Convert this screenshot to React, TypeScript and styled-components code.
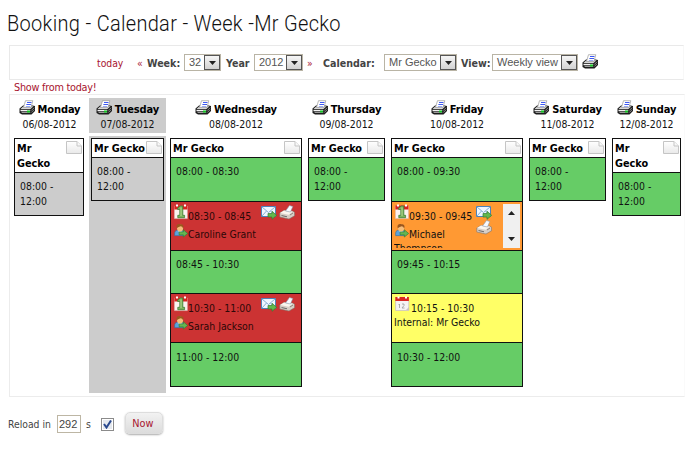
import React from 'react';
import styled, { createGlobalStyle, css } from 'styled-components';

const sans = `"DejaVu Sans Condensed", "DejaVu Sans", Tahoma, sans-serif`;

const GlobalStyle = createGlobalStyle`
  * { box-sizing: border-box; }
  body { margin: 0; background: #fff; font-family: ${sans}; font-stretch: condensed; font-size: 10.4px; color: #111; }
  svg { display: block; flex: none; }
`;

const Page = styled.main`
  width: 695px;
  height: 450px;
  padding-left: 9px;
  overflow: hidden;
  display: flex;
  flex-direction: column;
`;

const Title = styled.h1`
  margin: 0 0 0 -2px;
  height: 45px;
  padding-top: 10px;
  font: 300 22px/28px Roboto, sans-serif;
  letter-spacing: 0.35px;
  color: #111;
  white-space: nowrap;
  transform: scaleX(0.908);
  transform-origin: 0 0;
`;

const Toolbar = styled.div`
  display: flex;
  width: 675px;
  height: 35px;
  border: 1px solid #e9e9e9;
  border-right-color: #f8f8f8;
  padding: 8px 0 0 87px;
`;

const Item = styled.span<{ $w: number; $tone?: 'link' | 'bold' }>`
  width: ${p => p.$w}px;
  line-height: 19px;
  white-space: nowrap;
  color: ${p => (p.$tone === 'link' ? '#a8152f' : '#444')};
  font-weight: ${p => (p.$tone === 'bold' ? 700 : 400)};
  font-size: ${p => (p.$tone === 'bold' ? 10.6 : 10.3)}px;
`;

const Select = styled.span<{ $w: number; $gap: number }>`
  display: flex;
  width: ${p => p.$w}px;
  height: 17px;
  margin-right: ${p => p.$gap}px;
  border: 1px solid #b9b4a5;
  font: 11px/15px "Liberation Sans", Arial, sans-serif;
  color: #555;
  padding-left: 4px;
  justify-content: space-between;
  white-space: nowrap;
`;

const SelectButton = styled.span`
  display: flex;
  align-items: center;
  justify-content: center;
  width: 16px;
  border: 1px solid #555;
  background: linear-gradient(#f6f6f6, #d2d2d2);
`;

const ShowLink = styled.div`
  height: 14px;
  padding-left: 5px;
  font-size: 10.8px;
  letter-spacing: -0.25px;
  line-height: 15px;
  color: #a8152f;
`;

const Week = styled.section`
  display: grid;
  grid-template-columns: 75px 77px 136px 81px 136px 81px 73px;
  grid-template-rows: 35px 257px;
  gap: 3px 2px;
  width: 676px;
  height: 303px;
  border: 1px solid #ececec;
  border-right-color: #fafafa;
  padding: 3px 0 0 2px;
`;

const DayHead = styled.header<{ $today?: boolean }>`
  background: ${p => (p.$today ? '#ccc' : 'transparent')};
  padding-top: 2px;
  text-align: center;
  line-height: 15px;
  white-space: nowrap;
`;

const DayName = styled.div`
  display: flex;
  justify-content: center;
  gap: 2px;
  height: 17px;
  font-weight: 700;
  font-size: 11px;
  letter-spacing: -0.1px;
  line-height: 20px;
  color: #000;
`;

const DayColumn = styled.div<{ $today?: boolean }>`
  background: ${p => (p.$today ? '#ccc' : 'transparent')};
  padding: 2px 2px 0;
`;

const Slots = styled.div<{ $narrow?: boolean }>`
  border: 1px solid #111;
  margin-right: ${p => (p.$narrow ? 1 : 0)}px;
`;

const Owner = styled.div<{ $tall?: boolean }>`
  display: flex;
  justify-content: space-between;
  height: ${p => (p.$tall ? 33 : 18)}px;
  padding: 2px 1px 0 2px;
  background: #fff;
  font-weight: 700;
  font-size: 10.8px;
  line-height: 15px;
  white-space: pre;
  color: #000;
`;

const colors = { free: '#66cc66', past: '#cccccc', booked: '#cc3333', pending: '#ff9933', internal: '#ffff66' };
type Kind = keyof typeof colors;

const Slot = styled.div<{ $kind: Kind }>`
  height: 44px;
  border-top: 1px solid #111;
  background: ${p => colors[p.$kind]};
  padding: 6px 0 0 5px;
  line-height: 14.5px;
  white-space: pre;
  &:nth-child(4) { height: 43px; }
  &:nth-child(6) { padding-top: 7px; }
  &:nth-child(2):last-child { height: 43px; }
  ${p => ['booked', 'pending', 'internal'].includes(p.$kind) && css`
    display: flex;
    height: 49px;
    padding: 2px 2px 0 2px;
    overflow: hidden;
    &:nth-child(n) { height: 49px; }
  `}
  ${p => p.$kind === 'booked' && css`color: #2c0808;`}
`;

const Details = styled.div<{ $clip?: boolean }>`
  flex: 1;
  min-width: 0;
  height: 44px;
  overflow: ${p => (p.$clip ? 'hidden' : 'visible')};
`;

const Line = styled.div<{ $h: number; $drop?: number }>`
  display: flex;
  height: ${p => p.$h}px;
  > span { padding-top: ${p => p.$drop ?? 0}px; }
  > svg { margin-left: 1px; }
`;

const Actions = styled.div<{ $stacked?: boolean }>`
  display: flex;
  flex-direction: ${p => (p.$stacked ? 'column' : 'row')};
  gap: ${p => (p.$stacked ? 0 : 2)}px;
  padding: 1px ${p => (p.$stacked ? 11 : 4)}px 0 0;
`;

const Scrollbar = styled.div`
  display: flex;
  flex-direction: column;
  justify-content: space-between;
  align-items: center;
  width: 17px;
  height: 44px;
  padding: 7px 0 7px;
  background: #f0f0f0;
`;

const Footer = styled.footer`
  display: flex;
  align-items: center;
  height: 26px;
  margin: 14px 0 0 -1px;
  color: #444;
`;

const Seconds = styled.span`
  width: 24px;
  height: 18px;
  margin: 0 5px 1px 0;
  border: 1px solid #bdb6a4;
  padding-left: 1px;
  font: 11px/16px "Liberation Sans", Arial, sans-serif;
`;

const Check = styled.span`
  display: flex;
  align-items: center;
  justify-content: center;
  width: 13px;
  height: 13px;
  border: 1px solid #8b8b8b;
  background: #e4e8ee;
  box-shadow: inset 0 0 0 1px #fff;
  margin: 0 11px 0 10px;
`;

const NowButton = styled.button`
  width: 38px;
  height: 22px;
  margin-bottom: 2px;
  padding: 2px 2px 0 0;
  border: 1px solid #ddd;
  border-radius: 5px;
  background: linear-gradient(#f2f2f2, #dcdcdc);
  box-shadow: 0 1px 2px #aaa;
  color: #a8152f;
  font: 10.8px/18px ${sans};
  font-stretch: condensed;
`;

const Printer = () => (
  <svg width="17" height="15" viewBox="0 0 17 15">
    <path d="M.5 8.5 4 5.5h9.5L16 6v5l-3.5 3.5H3L.5 13z" fill="#1c1c1c" />
    <path d="M1.5 9 4.5 6.3h10L11.5 9z" fill="#d8d8d8" />
    <path d="M1.5 9.8h9.7v1.4H1.5z" fill="#f2f2f2" />
    <path d="M2 11.8h9.2V13H3z" fill="#9c9c9c" />
    <path d="M4.5 7.5 6.5.7h7.3L12 7.5z" fill="#fff" stroke="#8a8a8a" strokeWidth=".6" />
    <path d="M8 2.5h4.5M7.4 4.5H12" stroke="#2846f0" strokeWidth=".9" />
    <path d="M6.8 6.5h4.4" stroke="#7f92f0" strokeWidth=".8" />
    <path d="M8 10.5h3v2H8z" fill="#12c422" />
    <path d="m12.3 10.5 2.8-2.8M12.3 12.5l2.8-2.8" stroke="#999" strokeWidth=".9" />
  </svg>
);

const Note = () => (
  <svg width="16" height="13" viewBox="0 0 16 13">
    <defs>
      <linearGradient id="paper" x1="0" y1="0" x2="0" y2="1"><stop stopColor="#fff" /><stop offset="1" stopColor="#e9e9e9" /></linearGradient>
    </defs>
    <path d="M.5.5H11L15.5 5v7.5H.5z" fill="url(#paper)" stroke="#c5c5c5" />
    <path d="M11 .5V5h4.5" fill="#f8f8f8" stroke="#c5c5c5" />
  </svg>
);

const BookingDate = () => (
  <svg width="14" height="16" viewBox="0 0 14 16">
    <path d="M.4 2h13v12.6H.4z" fill="#fbf3f0" stroke="#d9b5b0" strokeWidth=".5" />
    <path d="M.4 1.5h13v4H.4z" fill="#d8231f" />
    <path d="M2 .6h2v1.8H2zM10 .6h2v1.8h-2z" fill="#fff" />
    <path d="M3.6 4 6.4 2h2.4v9.3h1.8v2.4H3.8v-2.4h2V5.4H3.6z" fill="#7cb45c" stroke="#3c7d35" strokeWidth=".8" />
    <path d="M7 3.5v8.5" stroke="#c4e2a4" strokeWidth=".8" />
  </svg>
);

const InternalDate = () => (
  <svg width="16" height="16" viewBox="0 0 16 16">
    <path d="M.6 4h13.2v10.5H.6z" fill="#f5f3f5" stroke="#c5bdc0" strokeWidth=".7" />
    <path d="M.3 1h13.6v4H.3z" fill="#d92623" />
    <path d="M2.5.5h2v2h-2zM10 .5h2v2h-2z" fill="#fff" />
    <path d="M4.5 8v4M3.5 8.5h1M7 8h2v1.5L7 12h2.5" fill="none" stroke="#999" strokeWidth=".8" />
    <path d="m11 14 3-3v3z" fill="#c7c2c2" />
  </svg>
);

const Person = () => (
  <svg width="14" height="15" viewBox="0 0 15 15">
    <path d="M.7 13V9.8Q1.2 7 4 7h4q2.5.5 3 3v3z" fill="#5ba3dc" stroke="#326996" strokeWidth=".6" />
    <path d="m4.5 7.5 2 4 2-4z" fill="#edf7ff" />
    <ellipse cx="6.5" cy="4.8" rx="3.3" ry="3.8" fill="#f4bd7c" />
    <path d="M3 5C1.6 1 5-.1 7 .7c3 0 3.8 2 2.8 4.6Q9 3 7 3 4 4 3 5z" fill="#9b571e" />
    <path d="M5.5 9H10V6.7l4.6 4L10 14.5v-2.3H5.5z" fill="#65b552" stroke="#327c31" strokeWidth=".7" />
  </svg>
);

const Mail = () => (
  <svg width="16" height="15" viewBox="0 0 16 15">
    <path d="M.5 1.5h14v10H.5z" fill="#eff7ff" stroke="#4c83ba" />
    <path d="m1 2 6.5 5.5L14 2M1 11l4.5-5M14 11 9.5 6" fill="none" stroke="#87afd4" />
    <path d="M7 8.5h4V6.3l4.7 4L11 14.3V12H7z" fill="#63b84d" stroke="#327c31" strokeWidth=".7" />
  </svg>
);

const SmallPrinter = () => (
  <svg width="16" height="15" viewBox="0 0 16 15">
    <path d="m.8 8 4-2.4 9.2.6 1.5 1v3.6L10 14 .8 12z" fill="#d7cec6" stroke="#81746b" strokeWidth=".6" />
    <path d="m1 8 4-2.4 9 .8-4.4 3.4z" fill="#fbf6ee" />
    <path d="m6.5 6 4-5.5 3.3 1L11.5 7z" fill="#f8faff" stroke="#8999aa" strokeWidth=".6" />
    <path d="M2.5 10 8 11.3v1L2.5 11z" fill="#6b6b6b" />
    <path d="m11 10 3-2" stroke="#8d8177" />
  </svg>
);

const Triangle = ({ up }: { up?: boolean }) => (
  <svg width="7" height="4" viewBox="0 0 7 4"><path d={up ? 'M0 4 3.5 0 7 4z' : 'M0 0h7L3.5 4z'} fill="#222" /></svg>
);

const Dropdown = ({ w, gap, children }: { w: number; gap: number; children: string }) => (
  <Select $w={w} $gap={gap}>{children}<SelectButton><Triangle /></SelectButton></Select>
);

interface Entry { time: string; kind: Kind; who?: string }
interface Day { name: string; date: string; tall?: boolean; today?: boolean; entries: Entry[] }

const shortDay = (kind: Kind): Entry[] => [{ time: '08:00 -\n12:00', kind }];

const days: Day[] = [
  { name: 'Monday', date: '06/08-2012', tall: true, entries: shortDay('past') },
  { name: 'Tuesday', date: '07/08-2012', today: true, entries: shortDay('past') },
  { name: 'Wednesday', date: '08/08-2012', entries: [
    { time: '08:00 - 08:30', kind: 'free' },
    { time: '08:30 - 08:45', kind: 'booked', who: 'Caroline Grant' },
    { time: '08:45 - 10:30', kind: 'free' },
    { time: '10:30 - 11:00', kind: 'booked', who: 'Sarah Jackson' },
    { time: '11:00 - 12:00', kind: 'free' },
  ] },
  { name: 'Thursday', date: '09/08-2012', entries: shortDay('free') },
  { name: 'Friday', date: '10/08-2012', entries: [
    { time: '08:00 - 09:30', kind: 'free' },
    { time: '09:30 - 09:45', kind: 'pending', who: 'Michael\nThompson' },
    { time: '09:45 - 10:15', kind: 'free' },
    { time: '10:15 - 10:30', kind: 'internal', who: 'Internal: Mr Gecko' },
    { time: '10:30 - 12:00', kind: 'free' },
  ] },
  { name: 'Saturday', date: '11/08-2012', entries: shortDay('free') },
  { name: 'Sunday', date: '12/08-2012', tall: true, entries: shortDay('free') },
];

const SlotView = ({ time, kind, who }: Entry) => {
  if (!who) return <Slot $kind={kind}>{time}</Slot>;
  if (kind === 'internal') {
    return (
      <Slot $kind={kind}>
        <Details>
          <Line $h={19} $drop={5}><InternalDate /><span>{time}</span></Line>
          <div>{who}</div>
        </Details>
      </Slot>
    );
  }
  const pending = kind === 'pending';
  const [first, rest] = who.split('\n');
  return (
    <Slot $kind={kind}>
      <Details $clip={pending}>
        <Line $h={19} $drop={5}><BookingDate /><span>{time}</span></Line>
        <Line $h={18} $drop={4}><Person /><span>{first}</span></Line>
        {rest && <Line $h={9}><span>{rest}</span></Line>}
      </Details>
      <Actions $stacked={pending}><Mail /><SmallPrinter /></Actions>
      {pending && <Scrollbar><Triangle up /><Triangle /></Scrollbar>}
    </Slot>
  );
};

export default function App() {
  return (
    <Page>
      <GlobalStyle />
      <Title>Booking - Calendar - Week -Mr Gecko</Title>
      <Toolbar>
        <Item $w={40} $tone="link">today</Item>
        <Item $w={10} $tone="link">«</Item>
        <Item $w={37} $tone="bold">Week:</Item>
        <Dropdown w={37} gap={5}>32</Dropdown>
        <Item $w={28} $tone="bold">Year</Item>
        <Dropdown w={49} gap={4}>2012</Dropdown>
        <Item $w={16} $tone="link">»</Item>
        <Item $w={61} $tone="bold">Calendar:</Item>
        <Dropdown w={73} gap={4}>Mr Gecko</Dropdown>
        <Item $w={31} $tone="bold">View:</Item>
        <Dropdown w={86} gap={4}>Weekly view</Dropdown>
        <Printer />
      </Toolbar>
      <ShowLink>Show from today!</ShowLink>
      <Week>
        {days.map(d => (
          <DayHead key={d.name} $today={d.today}>
            <DayName><Printer />{d.name}</DayName>
            {d.date}
          </DayHead>
        ))}
        {days.map(d => (
          <DayColumn key={d.name} $today={d.today}>
            <Slots $narrow={d.name === 'Monday'}>
              <Owner $tall={d.tall}>{d.tall ? 'Mr\nGecko' : 'Mr Gecko'}<Note /></Owner>
              {d.entries.map(e => <SlotView key={e.time} {...e} />)}
            </Slots>
          </DayColumn>
        ))}
      </Week>
      <Footer>
        <Item $w={49}>Reload in</Item>
        <Seconds>292</Seconds>
        s
        <Check>
          <svg width="9" height="9" viewBox="0 0 9 9"><path d="m1 4 2.5 3.5L8 .5" fill="none" stroke="#29488e" strokeWidth="2" /></svg>
        </Check>
        <NowButton>Now</NowButton>
      </Footer>
    </Page>
  );
}
